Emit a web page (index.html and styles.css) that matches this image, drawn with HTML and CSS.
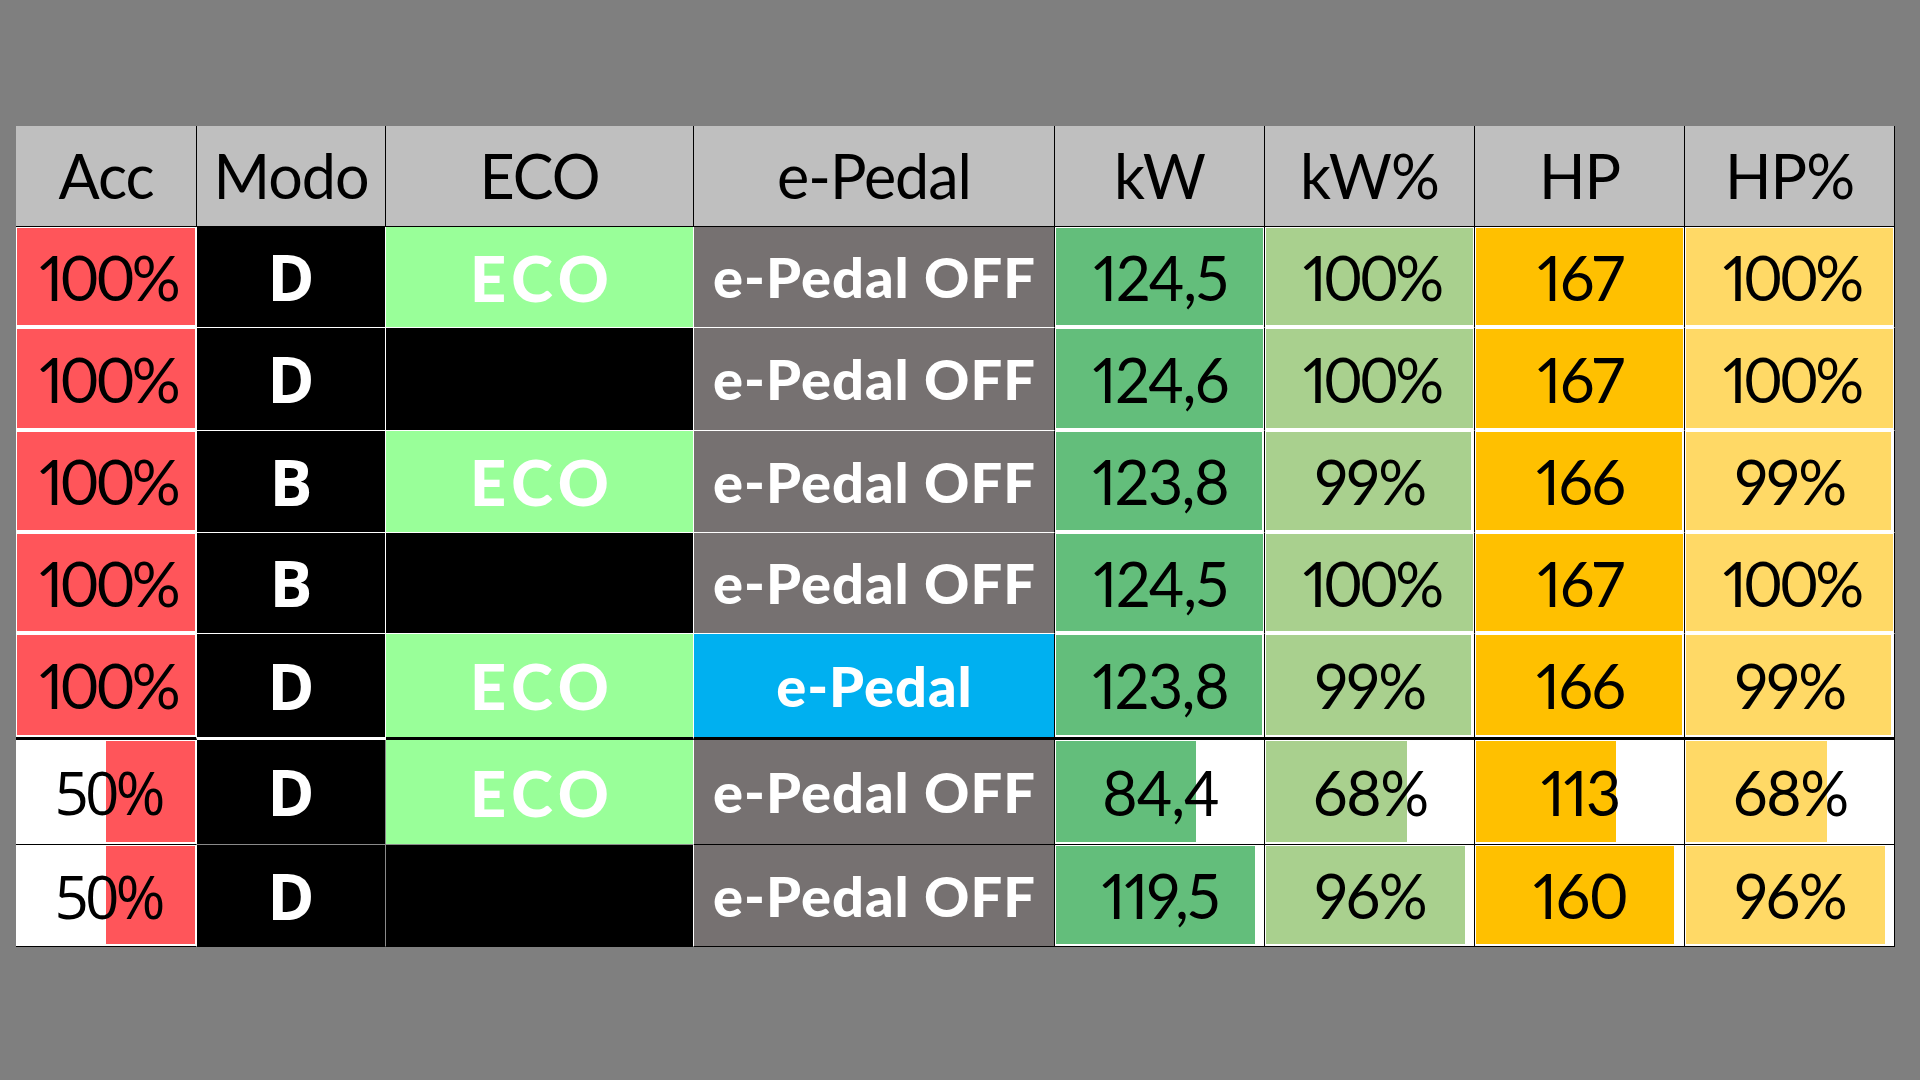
FILE: index.html
```html
<!DOCTYPE html>
<html lang="es">
<head>
<meta charset="utf-8">
<title>Acc / Modo / ECO / e-Pedal</title>
<link rel="stylesheet" href="styles.css">
</head>
<body>
<main class="page">
  <div class="grid">
    <div class="row head">
      <div class="th">Acc</div>
      <div class="th">Modo</div>
      <div class="th">ECO</div>
      <div class="th">e-Pedal</div>
      <div class="th">kW</div>
      <div class="th">kW%</div>
      <div class="th">HP</div>
      <div class="th">HP%</div>
    </div>

    <div class="row">
      <div class="td c-acc"><div class="bar bar-red bar-rtl" style="--p:1"></div><span class="num full">100%</span></div>
      <div class="td c-mode"><span class="gear">D</span></div>
      <div class="td c-eco on"><span class="eco">ECO</span></div>
      <div class="td c-ped"><span class="ped">e-Pedal OFF</span></div>
      <div class="td c-kw"><div class="bar bar-kw" style="--p:.999"></div><span class="num">124,5</span></div>
      <div class="td c-kwp"><div class="bar bar-kwp" style="--p:1"></div><span class="num full">100%</span></div>
      <div class="td c-hp"><div class="bar bar-hp" style="--p:1"></div><span class="num">167</span></div>
      <div class="td c-hpp"><div class="bar bar-hpp" style="--p:1"></div><span class="num full">100%</span></div>
    </div>

    <div class="row">
      <div class="td c-acc"><div class="bar bar-red bar-rtl" style="--p:1"></div><span class="num full">100%</span></div>
      <div class="td c-mode"><span class="gear">D</span></div>
      <div class="td c-eco"></div>
      <div class="td c-ped"><span class="ped">e-Pedal OFF</span></div>
      <div class="td c-kw"><div class="bar bar-kw" style="--p:1"></div><span class="num">124,6</span></div>
      <div class="td c-kwp"><div class="bar bar-kwp" style="--p:1"></div><span class="num full">100%</span></div>
      <div class="td c-hp"><div class="bar bar-hp" style="--p:1"></div><span class="num">167</span></div>
      <div class="td c-hpp"><div class="bar bar-hpp" style="--p:1"></div><span class="num full">100%</span></div>
    </div>

    <div class="row">
      <div class="td c-acc"><div class="bar bar-red bar-rtl" style="--p:1"></div><span class="num full">100%</span></div>
      <div class="td c-mode"><span class="gear">B</span></div>
      <div class="td c-eco on"><span class="eco">ECO</span></div>
      <div class="td c-ped"><span class="ped">e-Pedal OFF</span></div>
      <div class="td c-kw"><div class="bar bar-kw" style="--p:.994"></div><span class="num">123,8</span></div>
      <div class="td c-kwp"><div class="bar bar-kwp" style="--p:.99"></div><span class="num">99%</span></div>
      <div class="td c-hp"><div class="bar bar-hp" style="--p:.994"></div><span class="num">166</span></div>
      <div class="td c-hpp"><div class="bar bar-hpp" style="--p:.99"></div><span class="num">99%</span></div>
    </div>

    <div class="row">
      <div class="td c-acc"><div class="bar bar-red bar-rtl" style="--p:1"></div><span class="num full">100%</span></div>
      <div class="td c-mode"><span class="gear">B</span></div>
      <div class="td c-eco"></div>
      <div class="td c-ped"><span class="ped">e-Pedal OFF</span></div>
      <div class="td c-kw"><div class="bar bar-kw" style="--p:.999"></div><span class="num">124,5</span></div>
      <div class="td c-kwp"><div class="bar bar-kwp" style="--p:1"></div><span class="num full">100%</span></div>
      <div class="td c-hp"><div class="bar bar-hp" style="--p:1"></div><span class="num">167</span></div>
      <div class="td c-hpp"><div class="bar bar-hpp" style="--p:1"></div><span class="num full">100%</span></div>
    </div>

    <div class="row split">
      <div class="td c-acc"><div class="bar bar-red bar-rtl" style="--p:1"></div><span class="num full">100%</span></div>
      <div class="td c-mode"><span class="gear">D</span></div>
      <div class="td c-eco on"><span class="eco">ECO</span></div>
      <div class="td c-ped active"><span class="ped">e-Pedal</span></div>
      <div class="td c-kw"><div class="bar bar-kw" style="--p:.994"></div><span class="num">123,8</span></div>
      <div class="td c-kwp"><div class="bar bar-kwp" style="--p:.99"></div><span class="num">99%</span></div>
      <div class="td c-hp"><div class="bar bar-hp" style="--p:.994"></div><span class="num">166</span></div>
      <div class="td c-hpp"><div class="bar bar-hpp" style="--p:.99"></div><span class="num">99%</span></div>
    </div>

    <div class="row low">
      <div class="td c-acc"><div class="bar bar-red bar-rtl" style="--p:.5"></div><span class="num alt">50%</span></div>
      <div class="td c-mode"><span class="gear">D</span></div>
      <div class="td c-eco on"><span class="eco">ECO</span></div>
      <div class="td c-ped"><span class="ped">e-Pedal OFF</span></div>
      <div class="td c-kw"><div class="bar bar-kw" style="--p:.677"></div><span class="num">84,4</span></div>
      <div class="td c-kwp"><div class="bar bar-kwp" style="--p:.68"></div><span class="num">68%</span></div>
      <div class="td c-hp"><div class="bar bar-hp" style="--p:.677"></div><span class="num">113</span></div>
      <div class="td c-hpp"><div class="bar bar-hpp" style="--p:.68"></div><span class="num">68%</span></div>
    </div>

    <div class="row low last">
      <div class="td c-acc"><div class="bar bar-red bar-rtl" style="--p:.5"></div><span class="num alt">50%</span></div>
      <div class="td c-mode"><span class="gear">D</span></div>
      <div class="td c-eco"></div>
      <div class="td c-ped"><span class="ped">e-Pedal OFF</span></div>
      <div class="td c-kw"><div class="bar bar-kw" style="--p:.959"></div><span class="num">119,5</span></div>
      <div class="td c-kwp"><div class="bar bar-kwp" style="--p:.96"></div><span class="num">96%</span></div>
      <div class="td c-hp"><div class="bar bar-hp" style="--p:.958"></div><span class="num">160</span></div>
      <div class="td c-hpp"><div class="bar bar-hpp" style="--p:.96"></div><span class="num">96%</span></div>
    </div>
  </div>
</main>
</body>
</html>
```

FILE: styles.css
```css
* { box-sizing: border-box; }

html, body {
  margin: 0;
  padding: 0;
  background: #7f7f7f;
  width: 1920px;
  height: 1080px;
  overflow: hidden;
}

.page {
  padding: 126px 0 0 16px;
}

.grid {
  display: grid;
  grid-template-columns: 181px 189px 308px 361px 210px 210px 210px 210px;
  grid-template-rows: 101px 101px 103px 102px 101px 106px 105px 102px;
  width: 1879px;
}

.row { display: contents; }

/* header */
.th {
  background: #bfbfbf;
  border-right: 1px solid #000;
  border-bottom: 1px solid #000;
  display: flex;
  align-items: center;
  justify-content: center;
  font-family: "Lato", "Open Sans", sans-serif;
  font-weight: 400;
  font-size: 61px;
  letter-spacing: -1px;
  color: #000;
  padding-bottom: 2px;
}

/* data cells */
.td {
  background: #fff;
  display: grid;
  grid-template-columns: 1fr;
  grid-template-rows: 1fr;
  border-right: 1px solid #fff;
  border-bottom: 1px solid #fff;
  overflow: hidden;
}
.td > * { grid-area: 1 / 1; }

.c-kw, .c-kwp, .c-hp, .c-hpp, .c-ped { border-right-color: #000; }

.bar {
  justify-self: start;
  width: calc((100% - 2px) * var(--p));
  margin: 1px 1px 2px 1px;
}
.bar-rtl { justify-self: end; }
.bar-red { background: #ff555a; }
.bar-kw  { background: #63be7b; }
.bar-kwp { background: #a9d08e; }
.bar-hp  { background: #ffc000; }
.bar-hpp { background: #ffd966; }

.c-mode { background: #000; }
.c-eco  { background: #000; }
.c-eco.on { background: #99ff99; }
.c-ped  { background: #767171; }
.c-ped.active { background: #00b0f0; }

.num {
  place-self: center;
  font-family: "Lato", "Open Sans", sans-serif;
  font-weight: 400;
  font-size: 61px;
  letter-spacing: -1.5px;
  font-variant-numeric: proportional-nums;
  color: #000;
  line-height: 1;
  padding-left: 1.5px;
}
.num.full {
  letter-spacing: -4px;
  padding-left: 4px;
}
.num.alt {
  font-family: "Open Sans", "Noto Sans", sans-serif;
  font-size: 60px;
  letter-spacing: -4px;
  padding-left: 4px;
}

.gear {
  place-self: center;
  font-family: "Open Sans", "Noto Sans", sans-serif;
  font-weight: 700;
  font-size: 64px;
  color: #fff;
  line-height: 1;
}

.eco {
  place-self: center;
  font-family: "Lato", "Open Sans", sans-serif;
  font-weight: 900;
  font-size: 63px;
  letter-spacing: 6px;
  padding-left: 6px;
  color: #fff;
  line-height: 1;
}

.ped {
  place-self: center;
  font-family: "Lato", "Open Sans", sans-serif;
  font-weight: 900;
  font-size: 56px;
  letter-spacing: 1px;
  padding-left: 1px;
  color: #fff;
  line-height: 1;
}

/* row separators */
.row.split > .td { border-bottom: 3px solid #000; }
.row.split > .c-mode { border-bottom-color: #fff; }
.row.low > .td { border-bottom-color: #000; }
.row.low > .c-mode,
.row.low > .c-eco { border-bottom-color: #8a8a8a; }
.row.low > .c-mode { border-right-color: #8a8a8a; }
.row.low > .c-acc { border-right-color: #fff; }
.row.last > .td { border-bottom-color: #000; }
.c-hpp, .th:last-child { border-right-color: #000; }
```
